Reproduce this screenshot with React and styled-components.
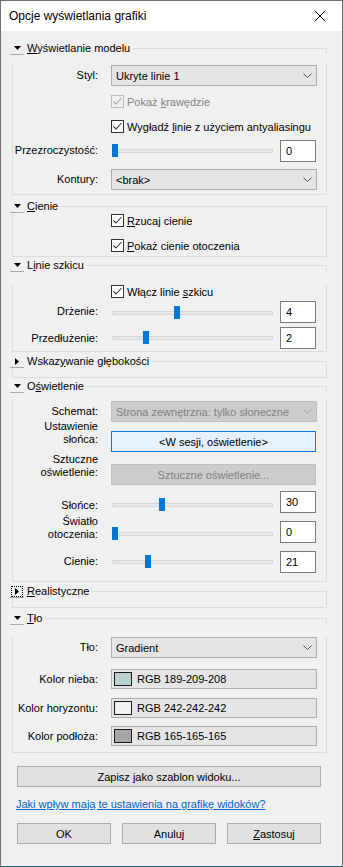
import React from "react"
import styled, { createGlobalStyle } from "styled-components"

const GlobalStyle = createGlobalStyle`
	html,
	body {
		margin: 0;
		padding: 0;
		background: #f0f0f0;
	}
	body {
		font-family: "Liberation Sans", Arial, sans-serif;
		font-size: 11px;
		color: #000;
	}
`

const Window = styled.div`
	box-sizing: border-box;
	width: 343px;
	height: 867px;
	border: 1px solid #6f6f6f;
	border-bottom-color: #2b6680;
	background: #f0f0f0;
	display: flex;
	flex-direction: column;
`

const TitleBar = styled.div`
	height: 30px;
	flex-shrink: 0;
	background: #fff;
	display: flex;
	align-items: center;
	justify-content: space-between;
	padding: 0 16px 0 8px;
	font-size: 12px;
`

const Content = styled.div`
	padding: 11px 0 0 9px;
`

const Section = styled.section`
	width: 317px;
	margin-top: ${p => p.$mt || 0}px;
`

const Header = styled.div`
	display: flex;
	height: 13px;
`

const Expander = styled.span`
	box-sizing: border-box;
	width: 14px;
	height: 13px;
	flex-shrink: 0;
	display: flex;
	align-items: center;
	justify-content: center;
	border-bottom: 1px solid #a9a9a9;
	outline: ${p => (p.$focused ? "1px dotted #000" : "none")};
	outline-offset: -2px;
`

const Caption = styled.span`
	padding: 0 3px 0 3px;
	line-height: 13px;
	white-space: nowrap;
`

const Rule = styled.span`
	flex: 1;
	align-self: flex-end;
	box-sizing: border-box;
	height: 7px;
	border-top: 1px solid #dcdcdc;
	border-right: 1px solid #dcdcdc;
`

const Box = styled.div`
	margin-left: 2px;
	border: 1px solid #dcdcdc;
	border-top: none;
	padding-bottom: ${p => p.$pb || 0}px;
	height: ${p => (p.$h !== undefined ? `${p.$h}px` : "auto")};
`

const Row = styled.div`
	display: flex;
	align-items: ${p => p.$align || "flex-start"};
	margin-top: ${p => p.$mt || 0}px;
`

const Label = styled.div`
	width: 85px;
	flex-shrink: 0;
	margin-right: 13px;
	margin-top: ${p => p.$mt || 0}px;
	margin-bottom: ${p => p.$mb || 0}px;
	text-align: right;
	line-height: 13px;
`

const CheckRow = styled.div`
	display: flex;
	align-items: center;
	height: 13px;
	padding-left: 98px;
	margin-top: ${p => p.$mt || 0}px;
	color: ${p => (p.$disabled ? "#838383" : "#000")};
`

const CheckBox = styled.span`
	box-sizing: border-box;
	width: 13px;
	height: 13px;
	display: flex;
	align-items: center;
	justify-content: center;
	border: 1px solid ${p => (p.$disabled ? "#bcbcbc" : "#333")};
	background: ${p => (p.$disabled ? "#f0f0f0" : "#fff")};
	margin-right: 3px;
`

const Combo = styled.div`
	box-sizing: border-box;
	width: 206px;
	height: 21px;
	display: flex;
	align-items: center;
	justify-content: space-between;
	padding: 0 4px 0 4px;
	background: ${p => (p.$disabled ? "#cccccc" : "#e5e5e5")};
	border: 1px solid ${p => (p.$disabled ? "#bfbfbf" : "#adadad")};
	color: ${p => (p.$disabled ? "#838383" : "#000")};
`

const SliderWrap = styled.div`
	position: relative;
	width: 161px;
	height: 13px;
	margin: ${p => p.$mt || 0}px 7px 0 1px;
	display: flex;
	align-items: center;
`

const Track = styled.div`
	box-sizing: border-box;
	width: 100%;
	height: 4px;
	background: #e7e7e7;
	border: 1px solid #d6d6d6;
`

const Thumb = styled.div`
	position: absolute;
	top: 0;
	width: 6px;
	height: 13px;
	background: #0078d7;
`

const TextBox = styled.div`
	box-sizing: border-box;
	width: 36px;
	height: 22px;
	margin-top: ${p => p.$mt || 0}px;
	display: flex;
	align-items: center;
	padding-left: 5px;
	background: #fff;
	border: 1px solid #7a7a7a;
`

const buttonColors = {
	normal: { bg: "#e1e1e1", border: "#adadad", color: "#000" },
	active: { bg: "#e5f1fb", border: "#0078d7", color: "#000" },
	disabled: { bg: "#cccccc", border: "#bfbfbf", color: "#838383" }
}

const PushButton = styled.div`
	box-sizing: border-box;
	width: ${p => p.$w}px;
	height: 21px;
	flex-shrink: 0;
	display: flex;
	align-items: center;
	justify-content: center;
	background: ${p => buttonColors[p.$kind || "normal"].bg};
	border: 1px solid ${p => buttonColors[p.$kind || "normal"].border};
	color: ${p => buttonColors[p.$kind || "normal"].color};
	margin-top: ${p => p.$mt || 0}px;
	margin-left: ${p => p.$ml || 0}px;
`

const ColorField = styled.div`
	box-sizing: border-box;
	width: 206px;
	height: 20px;
	display: flex;
	align-items: center;
	padding-left: 2px;
	background: #e5e5e5;
	border: 1px solid #adadad;
`

const Swatch = styled.span`
	box-sizing: border-box;
	width: 18px;
	height: 14px;
	margin-right: 5px;
	border: 1px solid #1a1a1a;
	background: ${p => p.$color};
`

const Link = styled.a`
	display: block;
	margin: 11px 0 0 15px;
	line-height: 13px;
	color: #0066cc;
	text-decoration: underline;
`

const ButtonBar = styled.div`
	display: flex;
	gap: 11px;
	margin: 12px 0 0 16px;
`

const ArrowDown = () => (
	<svg width="7" height="4" viewBox="0 0 7 4">
		<polygon points="0,0 7,0 3.5,4" fill="#000" />
	</svg>
)

const ArrowRight = () => (
	<svg width="4" height="7" viewBox="0 0 4 7">
		<polygon points="0,0 4,3.5 0,7" fill="#000" />
	</svg>
)

const Chevron = ({ color = "#555" }) => (
	<svg width="9" height="5" viewBox="0 0 9 5">
		<polyline points="0.5,0.5 4.5,4.5 8.5,0.5" fill="none" stroke={color} strokeWidth="1" />
	</svg>
)

const Tick = ({ color }) => (
	<svg width="11" height="11" viewBox="0 0 11 11">
		<polyline points="1.5,5.5 4,8 9.5,2" fill="none" stroke={color} strokeWidth="1.1" />
	</svg>
)

const Group = ({ caption, open = true, focused, mt, pb, h, children }) => (
	<Section $mt={mt}>
		<Header>
			<Expander $focused={focused}>{open ? <ArrowDown /> : <ArrowRight />}</Expander>
			<Caption>{caption}</Caption>
			<Rule />
		</Header>
		<Box $pb={pb} $h={h}>
			{children}
		</Box>
	</Section>
)

const Check = ({ children, disabled, mt }) => (
	<CheckRow $mt={mt} $disabled={disabled}>
		<CheckBox $disabled={disabled}>
			<Tick color={disabled ? "#a8a8a8" : "#333"} />
		</CheckBox>
		<span>{children}</span>
	</CheckRow>
)

const Select = ({ children, disabled }) => (
	<Combo $disabled={disabled}>
		<span>{children}</span>
		<Chevron color={disabled ? "#a6a6a6" : "#555"} />
	</Combo>
)

const Slider = ({ value, max, mt }) => (
	<SliderWrap $mt={mt}>
		<Track />
		<Thumb style={{ left: Math.round((value / max) * 155) }} />
	</SliderWrap>
)

const SliderField = ({ label, value, max, mt, lt = 4, st = 4, tt = 0 }) => (
	<Row $mt={mt}>
		<Label $mt={lt}>{label}</Label>
		<Slider value={value} max={max} mt={st} />
		<TextBox $mt={tt}>{value}</TextBox>
	</Row>
)

const ColorRow = ({ label, color, text, mt }) => (
	<Row $mt={mt} $align="center">
		<Label>{label}</Label>
		<ColorField>
			<Swatch $color={color} />
			<span>{text}</span>
		</ColorField>
	</Row>
)

export default function App() {
	return (
		<>
			<GlobalStyle />
			<Window>
				<TitleBar>
					<span>Opcje wyświetlania grafiki</span>
					<svg width="12" height="12" viewBox="0 0 12 12">
						<path d="M0.5 0.5 L11.5 11.5 M11.5 0.5 L0.5 11.5" stroke="#000" strokeWidth="1" />
					</svg>
				</TitleBar>
				<Content>
					<Group
						caption={
							<>
								<u>W</u>yświetlanie modelu
							</>
						}
						pb={4}
					>
						<Row $mt={10} $align="center">
							<Label>Styl:</Label>
							<Select>Ukryte linie 1</Select>
						</Row>
						<Check mt={9} disabled>
							Pokaż <u>k</u>rawędzie
						</Check>
						<Check mt={12}>
							Wygładź <u>l</u>inie z użyciem antyaliasingu
						</Check>
						<SliderField label="Przezroczystość:" value={0} max={100} mt={7} />
						<Row $mt={7} $align="center">
							<Label>Kontury:</Label>
							<Select>&lt;brak&gt;</Select>
						</Row>
					</Group>

					<Group
						mt={5}
						pb={4}
						caption={
							<>
								<u>C</u>ienie
							</>
						}
					>
						<Check mt={1}>
							<u>R</u>zucaj cienie
						</Check>
						<Check mt={12}>
							<u>P</u>okaż cienie otoczenia
						</Check>
					</Group>

					<Group
						mt={2}
						pb={2}
						caption={
							<>
								L<u>i</u>nie szkicu
							</>
						}
					>
						<Check mt={13}>
							Włącz linie <u>s</u>zkicu
						</Check>
						<SliderField label="Drżenie:" value={4} max={10} mt={3} lt={4} st={5} />
						<SliderField label="Przedłużenie:" value={2} max={10} mt={4} lt={5} st={4} />
					</Group>

					<Group
						mt={3}
						open={false}
						h={9}
						caption={
							<>
								Wskaz<u>y</u>wanie głębokości
							</>
						}
					/>

					<Group
						mt={2}
						pb={8}
						caption={
							<>
								O<u>ś</u>wietlenie
							</>
						}
					>
						<Row $mt={8} $align="center">
							<Label>Schemat:</Label>
							<Select disabled>Strona zewnętrzna: tylko słoneczne</Select>
						</Row>
						<Row $mt={-2} $align="flex-end">
							<Label $mb={6}>
								Ustawienie
								<br />
								słońca:
							</Label>
							<PushButton $w={205} $kind="active">
								&lt;W sesji, oświetlenie&gt;
							</PushButton>
						</Row>
						<Row $mt={1} $align="flex-end">
							<Label $mb={6}>
								Sztuczne
								<br />
								oświetlenie:
							</Label>
							<PushButton $w={205} $kind="disabled">
								Sztuczne oświetlenie...
							</PushButton>
						</Row>
						<SliderField label="Słońce:" value={30} max={100} mt={6} lt={8} st={7} />
						<SliderField
							label={
								<>
									Światło
									<br />
									otoczenia:
								</>
							}
							value={0}
							max={100}
							mt={2}
							lt={0}
							st={12}
							tt={6}
						/>
						<SliderField label="Cienie:" value={21} max={100} mt={8} lt={4} st={4} />
					</Group>

					<Group
						mt={3}
						open={false}
						focused
						h={9}
						caption={
							<>
								<u>R</u>ealistyczne
							</>
						}
					/>

					<Group
						mt={4}
						pb={6}
						caption={
							<>
								<u>T</u>ło
							</>
						}
					>
						<Row $mt={12} $align="center">
							<Label>Tło:</Label>
							<Select>Gradient</Select>
						</Row>
						<ColorRow mt={11} label="Kolor nieba:" color="rgb(189,209,208)" text="RGB 189-209-208" />
						<ColorRow mt={9} label="Kolor horyzontu:" color="rgb(242,242,242)" text="RGB 242-242-242" />
						<ColorRow mt={8} label="Kolor podłoża:" color="rgb(165,165,165)" text="RGB 165-165-165" />
					</Group>
				</Content>

				<PushButton $w={304} $mt={13} $ml={16}>
					Zapisz jako szablon widoku...
				</PushButton>
				<Link href="#">Jaki wpływ mają te ustawienia na grafikę widoków?</Link>
				<ButtonBar>
					<PushButton $w={94}>OK</PushButton>
					<PushButton $w={94}>Anuluj</PushButton>
					<PushButton $w={94}>
						<u>Z</u>astosuj
					</PushButton>
				</ButtonBar>
			</Window>
		</>
	)
}
